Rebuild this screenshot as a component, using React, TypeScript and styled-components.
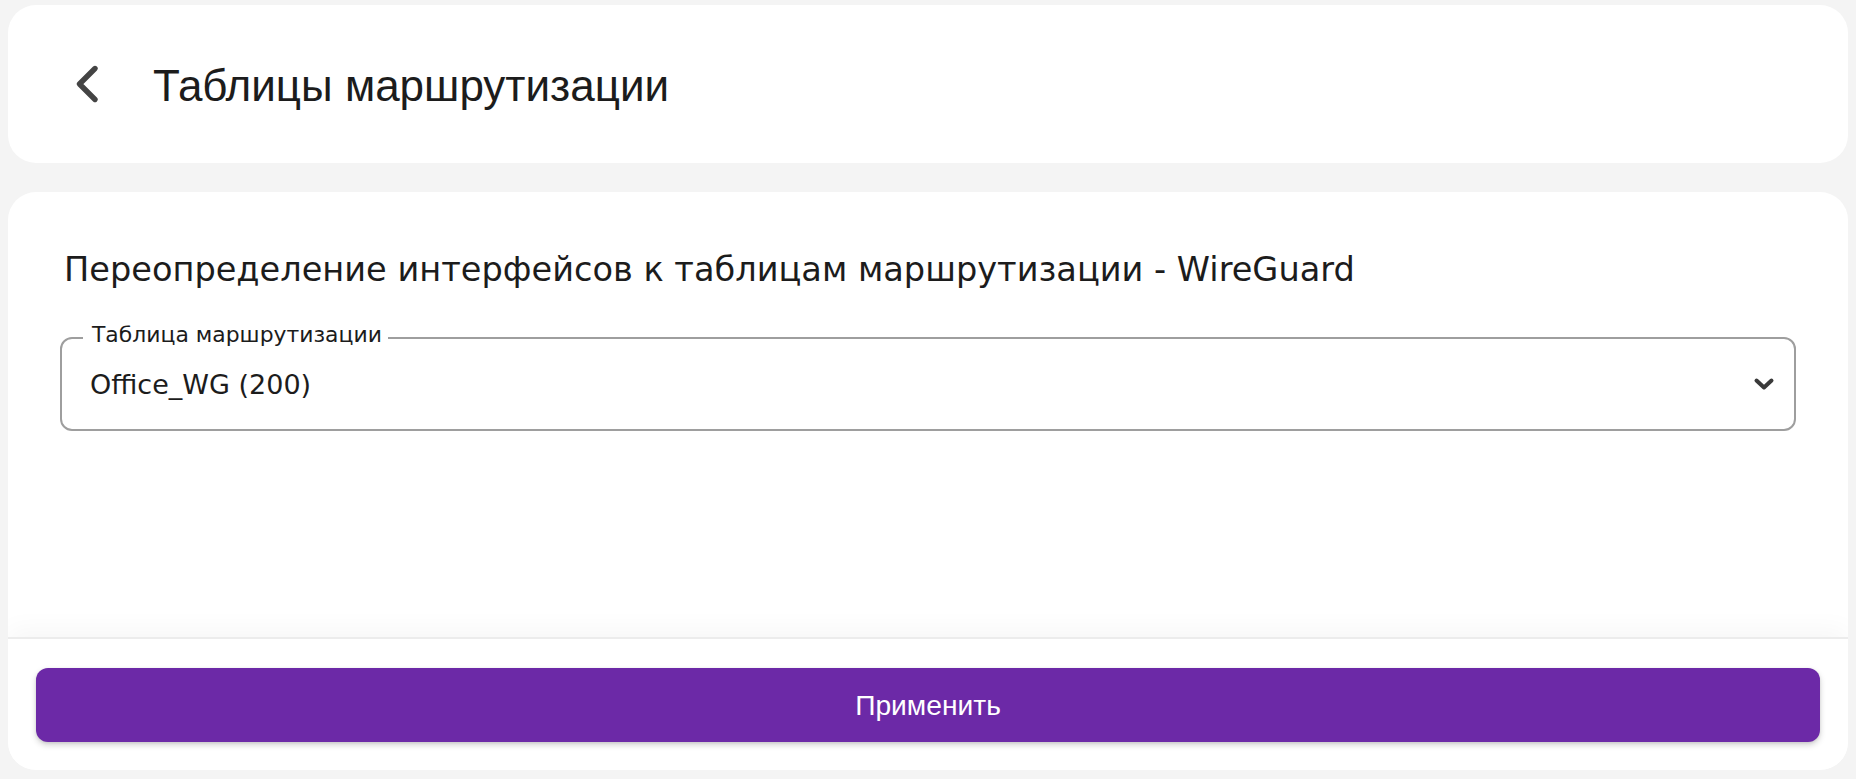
import React from "react";
import styled, { createGlobalStyle } from "styled-components";

const GlobalStyle = createGlobalStyle`
  html, body {
    margin: 0;
    padding: 0;
    background: #f4f4f4;
  }
  * { box-sizing: border-box; }
`;

const Page = styled.div`
  height: 779px;
  padding: 5px 8px 9px 8px;
  display: flex;
  flex-direction: column;
  gap: 29px;
`;

const HeaderCard = styled.header`
  height: 158px;
  flex: 0 0 auto;
  background: #ffffff;
  border-radius: 28px;
  display: flex;
  align-items: center;
  padding-left: 66px;
  gap: 53px;
`;

const BackButton = styled.button`
  border: none;
  background: transparent;
  padding: 0;
  display: flex;
  align-items: center;
  justify-content: center;
  cursor: pointer;
  color: #444444;
`;

const Title = styled.h1`
  margin: 4px 0 0 0;
  font-family: "Liberation Sans", Arial, sans-serif;
  font-weight: 400;
  font-size: 44px;
  color: #1c1c1c;
`;

const MainCard = styled.section`
  flex: 1 1 auto;
  background: #ffffff;
  border-radius: 28px;
  display: flex;
  flex-direction: column;
  overflow: hidden;
`;

const Content = styled.div`
  flex: 1 1 auto;
  padding: 58px 52px 0 52px;
  display: flex;
  flex-direction: column;
  gap: 47px;
`;

const Heading = styled.h2`
  margin: 0;
  padding-left: 4px;
  font-family: "DejaVu Sans", Verdana, sans-serif;
  font-weight: 400;
  font-size: 33.6px;
  line-height: 40px;
  color: #1c1c1c;
`;

const Field = styled.div`
  position: relative;
  height: 94px;
  border: 2px solid #9e9e9e;
  border-radius: 12px;
  display: flex;
  align-items: center;
  justify-content: space-between;
  padding: 0 18px 0 28px;
`;

const FloatingLabel = styled.span`
  position: absolute;
  top: -17px;
  left: 21px;
  padding: 0 6px 0 9px;
  background: #ffffff;
  font-family: "DejaVu Sans", Verdana, sans-serif;
  font-size: 21.9px;
  line-height: 25px;
  color: #1c1c1c;
`;

const Value = styled.span`
  font-family: "DejaVu Sans", Verdana, sans-serif;
  font-size: 27px;
  color: #1c1c1c;
`;

const Footer = styled.footer`
  flex: 0 0 auto;
  border-top: 2px solid #ececec;
  padding: 29px 28px 28px 28px;
  box-shadow: 0 -8px 24px rgba(0, 0, 0, 0.035);
  background: #ffffff;
`;

const ApplyButton = styled.button`
  width: 100%;
  height: 74px;
  border: none;
  border-radius: 12px;
  background: #6c29a7;
  color: #ffffff;
  font-family: "Liberation Sans", Arial, sans-serif;
  font-size: 28.2px;
  cursor: pointer;
  box-shadow: 0 3px 6px rgba(0, 0, 0, 0.18), 0 1px 3px rgba(0, 0, 0, 0.08);
`;

const BackIcon = () => (
  <svg width="26" height="40" viewBox="0 0 26 40" fill="none">
    <polyline
      points="21,4.5 5.5,20 21,35.5"
      stroke="currentColor"
      strokeWidth="5.4"
      strokeLinecap="round"
      strokeLinejoin="round"
    />
  </svg>
);

const ChevronDown = () => (
  <svg width="24" height="24" viewBox="0 0 24 24" fill="none">
    <polyline
      points="4.5,8.5 12,15.5 19.5,8.5"
      stroke="#3a3a3a"
      strokeWidth="4"
      strokeLinecap="round"
      strokeLinejoin="round"
    />
  </svg>
);

export default function App() {
  return (
    <>
      <GlobalStyle />
      <Page>
        <HeaderCard>
          <BackButton aria-label="Назад">
            <BackIcon />
          </BackButton>
          <Title>Таблицы маршрутизации</Title>
        </HeaderCard>
        <MainCard>
          <Content>
            <Heading>
              Переопределение интерфейсов к таблицам маршрутизации - WireGuard
            </Heading>
            <Field>
              <FloatingLabel>Таблица маршрутизации</FloatingLabel>
              <Value>Office_WG (200)</Value>
              <ChevronDown />
            </Field>
          </Content>
          <Footer>
            <ApplyButton>Применить</ApplyButton>
          </Footer>
        </MainCard>
      </Page>
    </>
  );
}
